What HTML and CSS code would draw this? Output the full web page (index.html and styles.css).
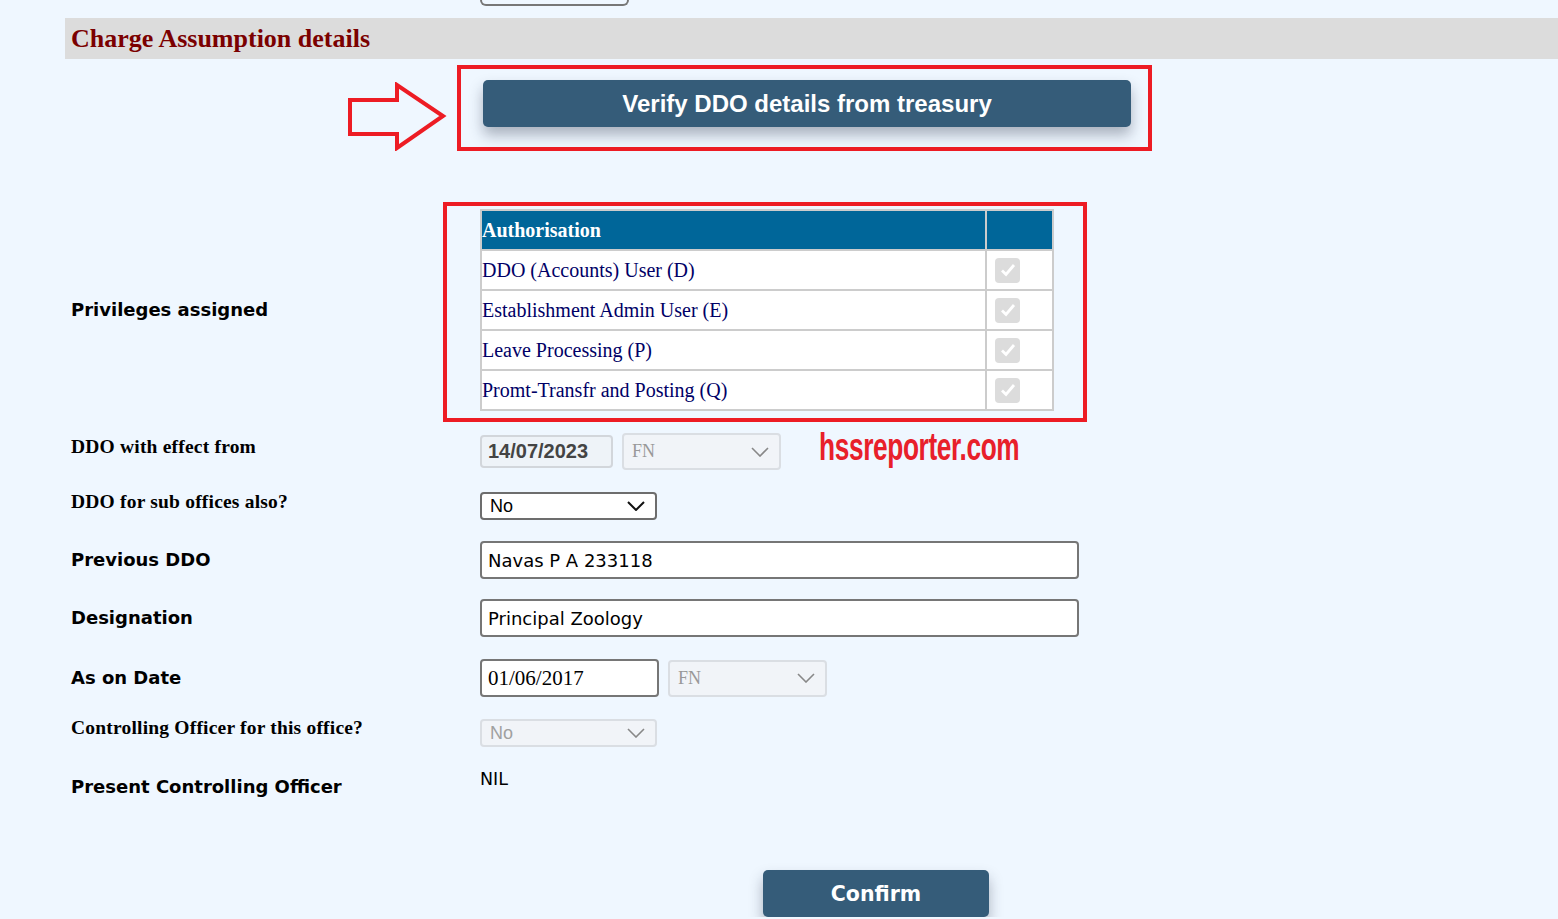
FILE: index.html
```
<!DOCTYPE html>
<html lang="en">
<head>
    <meta charset="UTF-8">
    <meta name="viewport" content="width=device-width, initial-scale=1.0">
    <title>Charge Assumption</title>
    <link rel="stylesheet" href="styles.css">
</head>
<body>
    <div class="top-stub"></div>
    <div class="section-head">Charge Assumption details</div>

    <div class="verify-row">
        <svg class="arrow" width="100" height="69" viewBox="0 0 100 69">
            <polygon points="3,18 50,18 50,3 96,34 50,66 50,52 3,52" fill="none" stroke="#ed1c24" stroke-width="4" stroke-linejoin="miter"/>
        </svg>
        <div class="mark-box verify-box">
            <button class="btn verify-btn" type="button">Verify DDO details from treasury</button>
        </div>
    </div>

    <div class="form">
        <div class="row priv-row">
            <div class="label sans priv-label">Privileges assigned</div>
            <div class="mark-box table-box">
                <table class="auth-table">
                    <thead>
                        <tr><th class="name-col">Authorisation</th><th class="check-col"></th></tr>
                    </thead>
                    <tbody>
                        <tr><td>DDO (Accounts) User (D)</td><td class="check-cell"><span class="check"><svg width="16" height="14" viewBox="0 0 16 14"><path d="M2 7.5 L6 11.5 L14 2" fill="none" stroke="#fff" stroke-width="2.8"/></svg></span></td></tr>
                        <tr><td>Establishment Admin User (E)</td><td class="check-cell"><span class="check"><svg width="16" height="14" viewBox="0 0 16 14"><path d="M2 7.5 L6 11.5 L14 2" fill="none" stroke="#fff" stroke-width="2.8"/></svg></span></td></tr>
                        <tr><td>Leave Processing (P)</td><td class="check-cell"><span class="check"><svg width="16" height="14" viewBox="0 0 16 14"><path d="M2 7.5 L6 11.5 L14 2" fill="none" stroke="#fff" stroke-width="2.8"/></svg></span></td></tr>
                        <tr><td>Promt-Transfr and Posting (Q)</td><td class="check-cell"><span class="check"><svg width="16" height="14" viewBox="0 0 16 14"><path d="M2 7.5 L6 11.5 L14 2" fill="none" stroke="#fff" stroke-width="2.8"/></svg></span></td></tr>
                    </tbody>
                </table>
            </div>
        </div>

        <div class="row wef-row">
            <div class="label serif lift">DDO with effect from</div>
            <div class="field-group">
                <input class="input date-disabled" type="text" value="14/07/2023" disabled>
                <div class="select select-disabled fn-select">
                    <span class="serif-val">FN</span>
                    <svg width="18" height="10" viewBox="0 0 18 10"><path d="M1 1 L9 9 L17 1" fill="none" stroke="#888" stroke-width="1.6"/></svg>
                </div>
                <div class="watermark">hssreporter.com</div>
            </div>
        </div>

        <div class="row sub-row">
            <div class="label serif lift-small">DDO for sub offices also?</div>
            <div class="select select-active small-select">
                <span>No</span>
                <svg width="18" height="10" viewBox="0 0 18 10"><path d="M1 1 L9 9 L17 1" fill="none" stroke="#111" stroke-width="2"/></svg>
            </div>
        </div>

        <div class="row text-row">
            <div class="label sans">Previous DDO</div>
            <input class="input wide-input" type="text" value="Navas P A 233118">
        </div>

        <div class="row text-row desig-row">
            <div class="label sans">Designation</div>
            <input class="input wide-input" type="text" value="Principal Zoology">
        </div>

        <div class="row date-row">
            <div class="label sans">As on Date</div>
            <div class="field-group">
                <input class="input date-input" type="text" value="01/06/2017">
                <div class="select select-disabled fn-select">
                    <span class="serif-val">FN</span>
                    <svg width="18" height="10" viewBox="0 0 18 10"><path d="M1 1 L9 9 L17 1" fill="none" stroke="#888" stroke-width="1.6"/></svg>
                </div>
            </div>
        </div>

        <div class="row ctrl-row">
            <div class="label serif lift">Controlling Officer for this office?</div>
            <div class="select select-disabled small-select">
                <span>No</span>
                <svg width="18" height="10" viewBox="0 0 18 10"><path d="M1 1 L9 9 L17 1" fill="none" stroke="#888" stroke-width="1.6"/></svg>
            </div>
        </div>

        <div class="row present-row">
            <div class="label sans">Present Controlling Officer</div>
            <div class="nil">NIL</div>
        </div>

        <div class="confirm-row">
            <button class="btn confirm-btn" type="button">Confirm</button>
        </div>
    </div>
</body>
</html>
```

FILE: styles.css
```
body {
    margin: 0;
    background: #eff7ff;
    font-family: "DejaVu Sans", sans-serif;
    color: #000;
    overflow: hidden;
}
.top-stub {
    margin-left: 480px;
    width: 145px;
    height: 4px;
    border: 2px solid #777;
    border-top: none;
    border-radius: 0 0 6px 6px;
}
.section-head {
    margin-top: 12px;
    margin-left: 65px;
    height: 41px;
    line-height: 42px;
    padding-left: 6px;
    background: #dcdcdc;
    font-family: "Liberation Serif", serif;
    font-weight: bold;
    font-size: 26px;
    color: #7b0000;
}
.verify-row {
    display: flex;
    align-items: flex-start;
    height: 86px;
    margin-top: 6px;
}
.arrow {
    margin-left: 347px;
    margin-top: 17px;
}
.mark-box {
    border: 4px solid #ed1c24;
    box-sizing: border-box;
}
.verify-box {
    margin-left: 10px;
    width: 695px;
    height: 86px;
    padding: 11px 0 0 22px;
}
.btn {
    display: block;
    border: none;
    border-radius: 5px;
    background-color: #355c79;
    color: #fff;
    font-weight: bold;
    cursor: pointer;
    box-shadow: 0 8px 14px rgba(40, 50, 70, 0.35);
}
.verify-btn {
    width: 648px;
    height: 47px;
    font-family: "Liberation Sans", Arial, sans-serif;
    font-size: 24px;
}
.form {
    display: flex;
    flex-direction: column;
}
.row {
    display: flex;
    align-items: center;
    padding-left: 71px;
}
.label {
    width: 409px;
    flex-shrink: 0;
    font-weight: bold;
    line-height: 22px;
}
.sans {
    font-family: "DejaVu Sans", Verdana, sans-serif;
    font-size: 18px;
}
.serif {
    font-family: "Liberation Serif", serif;
    font-size: 19.5px;
    letter-spacing: 0.2px;
}
.lift {
    margin-top: -5px;
    margin-bottom: 5px;
}
.lift-small {
    margin-top: -4px;
    margin-bottom: 4px;
}
.priv-row {
    margin-top: 51px;
}
.priv-label {
    width: 372px;
    margin-top: -2px;
    margin-bottom: 2px;
}
.table-box {
    width: 644px;
    height: 220px;
    padding: 3px 0 0 33px;
}
.auth-table {
    width: 574px;
    border-collapse: collapse;
    font-family: "Liberation Serif", serif;
    font-size: 20px;
}
.auth-table th,
.auth-table td {
    border: 2px solid #cccccc;
    height: 38px;
    padding: 0;
    text-align: left;
}
.auth-table th {
    background: #006699;
    color: #fff;
    font-size: 20px;
}
.auth-table td {
    background: #fff;
    color: #000066;
}
.check-col {
    width: 65px;
}
.auth-table td.check-cell {
    padding-left: 8px;
}
.check {
    display: flex;
    align-items: center;
    justify-content: center;
    width: 25px;
    height: 25px;
    border-radius: 4px;
    background: #dcdcdc;
}
.field-group {
    display: flex;
    align-items: center;
}
.input {
    box-sizing: border-box;
    border: 2px solid #767676;
    border-radius: 4px;
    background: #fff;
    color: #000;
    margin: 0;
    padding: 0 0 0 6px;
    outline: none;
}
.date-disabled {
    width: 133px;
    height: 33px;
    border: 2px solid #d2d6db;
    background: #eef3f8;
    color: #444;
    font-family: "Liberation Sans", Arial, sans-serif;
    font-weight: bold;
    font-size: 20px;
}
.select {
    box-sizing: border-box;
    display: flex;
    align-items: center;
    justify-content: space-between;
    border-radius: 4px;
    padding: 0 10px 0 8px;
    font-family: "Liberation Sans", Arial, sans-serif;
    font-size: 18px;
}
.select-disabled {
    border: 2px solid #dadee3;
    background: #f1f4f8;
    color: #a0a0a0;
}
.select-active {
    border: 2px solid #6d6d6d;
    background: #fff;
    color: #000;
}
.fn-select {
    width: 159px;
    height: 37px;
    margin-left: 9px;
}
.serif-val {
    font-family: "Liberation Serif", serif;
    font-size: 18px;
    color: #999;
}
.watermark {
    height: 36px;
    line-height: 36px;
    margin-left: 38px;
    margin-top: -10px;
    font-family: "Liberation Sans", Arial, sans-serif;
    font-weight: bold;
    font-size: 38px;
    color: #e8202a;
    transform: scaleX(0.69);
    transform-origin: left center;
    letter-spacing: -0.5px;
}
.wef-row {
    margin-top: 11px;
}
.small-select {
    width: 177px;
    height: 28px;
}
.sub-row {
    margin-top: 22px;
}
.text-row {
    margin-top: 21px;
}
.desig-row {
    margin-top: 20px;
}
.wide-input {
    width: 599px;
    height: 38px;
    font-family: "DejaVu Sans", sans-serif;
    font-size: 18px;
}
.date-row {
    margin-top: 22px;
}
.date-input {
    width: 179px;
    height: 38px;
    font-family: "Liberation Serif", serif;
    font-size: 21px;
}
.ctrl-row {
    margin-top: 22px;
}
.present-row {
    margin-top: 23px;
    height: 34px;
}
.nil {
    align-self: flex-start;
    margin-top: -1px;
    font-size: 17.5px;
}
.confirm-row {
    margin-top: 66px;
    padding-left: 763px;
}
.confirm-btn {
    width: 226px;
    height: 47px;
    font-family: "DejaVu Sans", Verdana, sans-serif;
    font-size: 20.5px;
}
```
